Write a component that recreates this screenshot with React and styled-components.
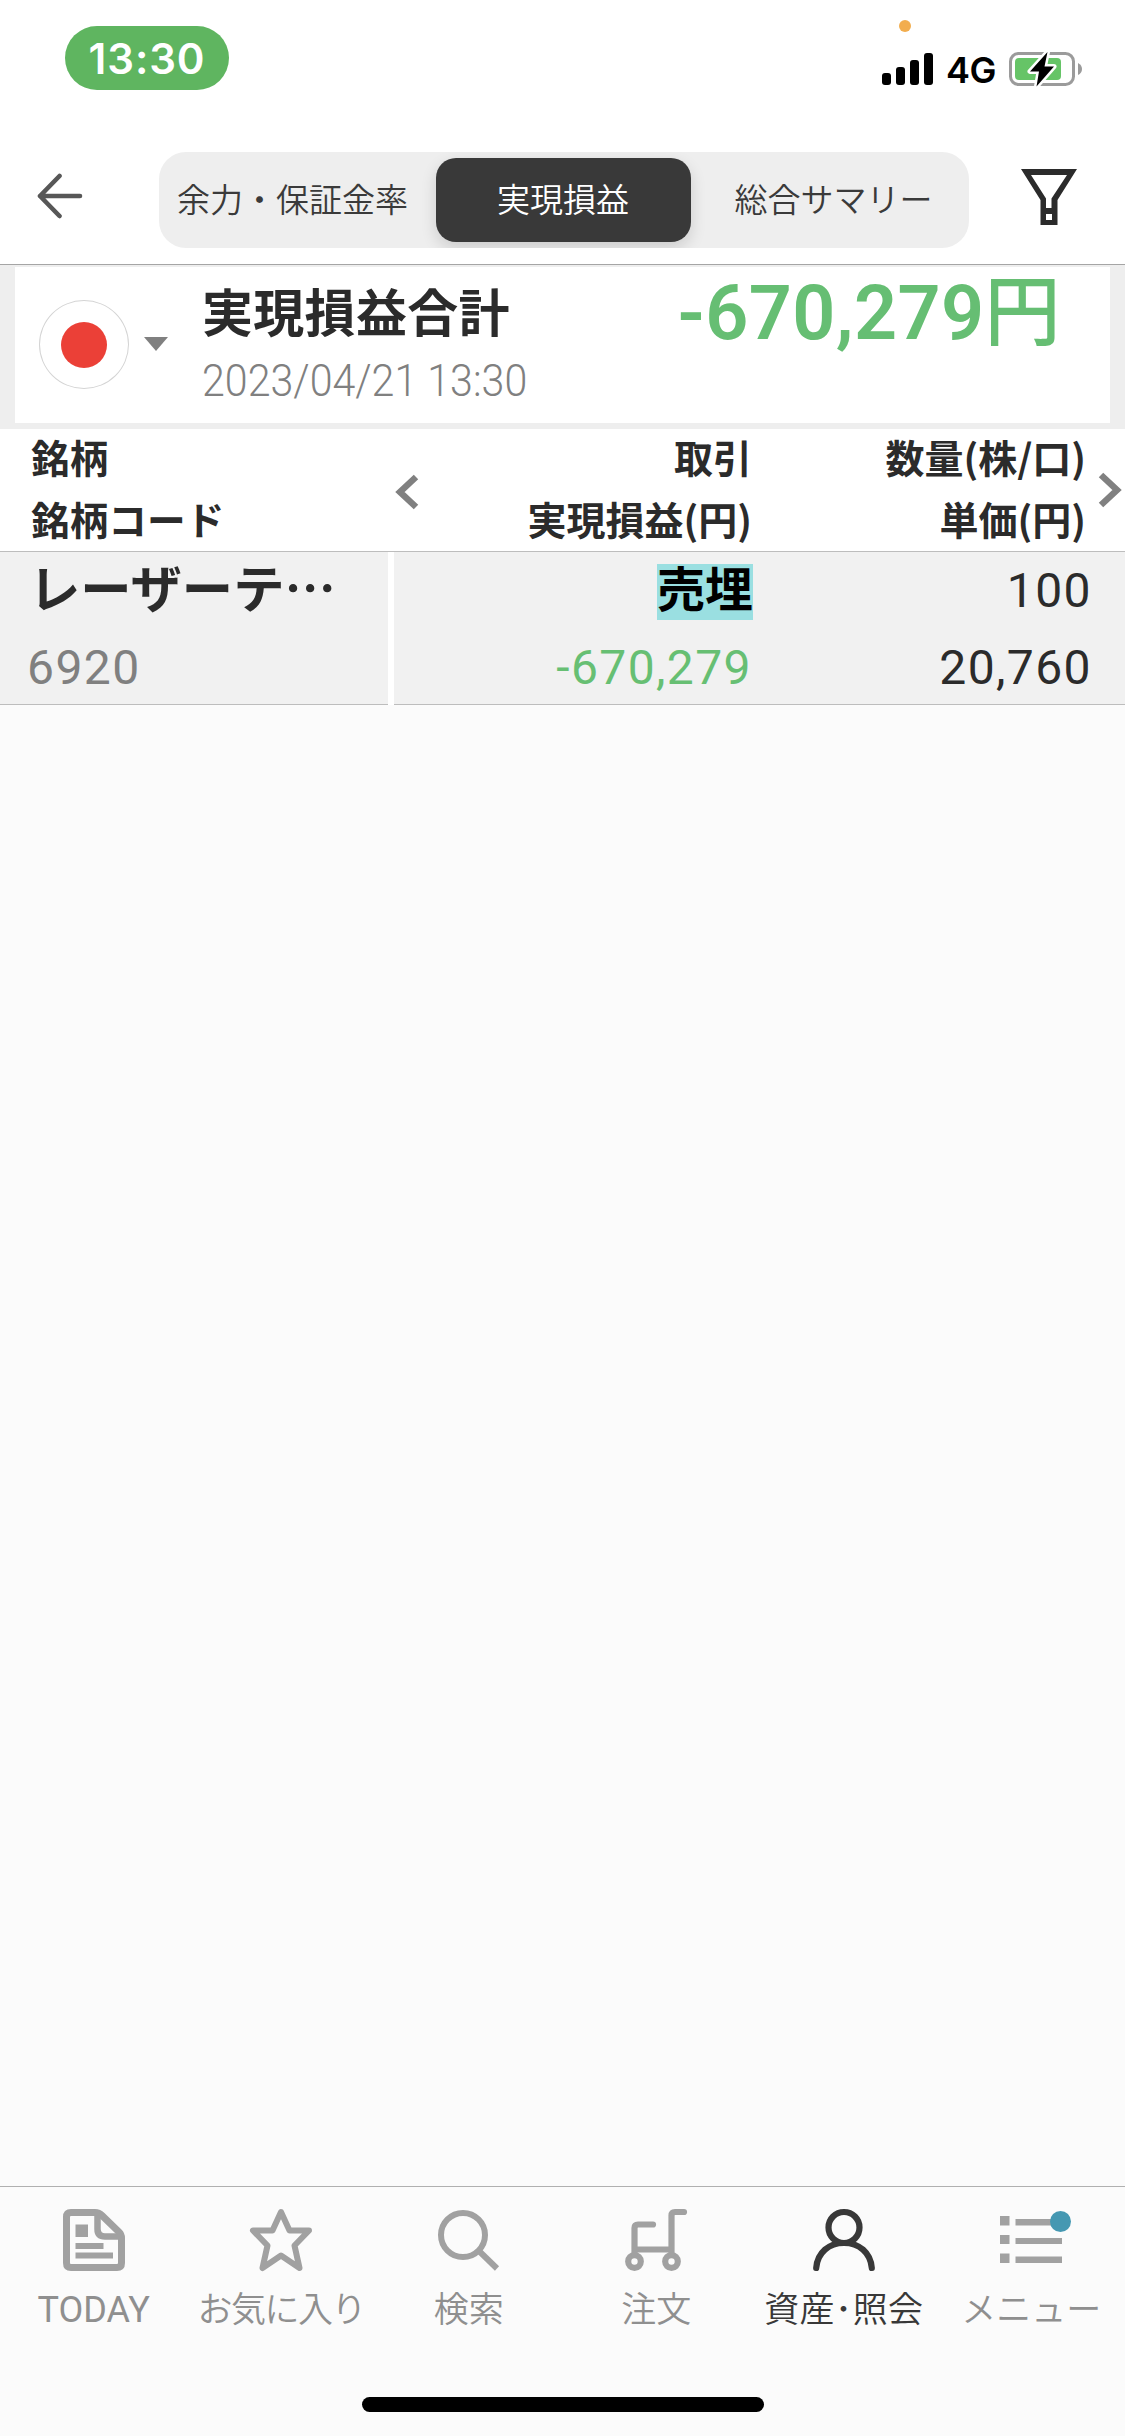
import React from "react"
import styled, { createGlobalStyle } from "styled-components"

const GlobalStyle = createGlobalStyle`
  * {
    box-sizing: border-box;
  }
  body {
    margin: 0;
    background: #fbfbfb;
    color: #2b2b2b;
    font-family: Roboto, "Noto Sans CJK JP", sans-serif;
  }
`

const Screen = styled.div`
  width: 1125px;
  height: 2436px;
  display: flex;
  flex-direction: column;
  overflow: hidden;
`

/* status bar */

const StatusBar = styled.div`
  height: 132px;
  flex: none;
  display: flex;
  justify-content: space-between;
  align-items: flex-start;
  padding: 26px 43px 0 65px;
  background: #fff;
`

const TimePill = styled.div`
  width: 164px;
  height: 64px;
  border-radius: 32px;
  background: #5fb560;
  color: #fff;
  font: 600 42px/65px Inter, sans-serif;
  letter-spacing: 0.9px;
  text-align: center;
`

const StatusRight = styled.div`
  display: flex;
  align-items: center;
  position: relative;
  height: 36px;
  margin-top: 25px;
`

const MicDot = styled.span`
  position: absolute;
  left: 17px;
  top: -31px;
  width: 12px;
  height: 12px;
  border-radius: 6px;
  background: #f2ad4e;
`

const Network = styled.span`
  width: 76px;
  padding: 2px 0 0 13px;
  font: 600 36px/36px Inter, sans-serif;
  letter-spacing: -0.5px;
  color: #000;
`

/* top navigation */

const NavBar = styled.div`
  height: 133px;
  flex: none;
  display: flex;
  align-items: flex-start;
  padding: 20px 48px 0 37px;
  background: #fff;
  border-bottom: 1px solid #a5a5a5;
`

const BackIcon = styled.svg`
  margin: 21px 76px 0 0;
  flex: none;
`

const FilterIcon = styled.svg`
  margin: 17px 0 0 auto;
  flex: none;
`

const Segments = styled.div`
  display: flex;
  justify-content: space-between;
  width: 810px;
  height: 96px;
  padding: 6px 8px 6px 6px;
  border-radius: 27px;
  background: #eeeeee;
  overflow: hidden;
`

const Segment = styled.div`
  width: 255px;
  height: 84px;
  border-radius: 20px;
  text-align: center;
  font-size: 33px;
  font-weight: 350;
  line-height: 86px;
  white-space: nowrap;
  color: ${props => (props.$active ? "#fff" : "#3a3a3a")};
  background: ${props => (props.$active ? "#393939" : "none")};
  box-shadow: ${props =>
    props.$active ? "0 6px 16px rgba(0, 0, 0, 0.14)" : "none"};
`

/* profit and loss summary */

const SummaryWrap = styled.div`
  height: 164px;
  flex: none;
  padding: 2px 15px 6px;
  background: #eeeeee;
`

const Summary = styled.div`
  height: 156px;
  display: flex;
  padding: 0 49px 0 24px;
  background: #fff;
`

const Flag = styled.div`
  width: 90px;
  height: 89px;
  margin-top: 33px;
  flex: none;
  display: grid;
  place-items: center;
  border: 1px solid #d4d4d4;
  border-radius: 50%;

  &::after {
    content: "";
    width: 46px;
    height: 46px;
    border-radius: 50%;
    background: #eb4037;
  }
`

const Caret = styled.div`
  height: 0;
  margin: 70px 34px 0 15px;
  border: 12px solid transparent;
  border-top: 14px solid #808080;
  border-bottom: 0;
`

const SummaryTitle = styled.div`
  height: 90px;
  font-size: 51px;
  font-weight: 700;
  line-height: 95px;
  letter-spacing: 0.3px;
  white-space: nowrap;
`

const SummaryDate = styled.div`
  color: #808080;
  font-size: 44px;
  font-weight: 300;
  line-height: 49px;
  white-space: nowrap;
  transform: scaleX(0.935);
  transform-origin: left;
`

const Amount = styled.div`
  margin-left: auto;
  color: #66be73;
  font-size: 75.5px;
  font-weight: 600;
  line-height: 92px;
  letter-spacing: 0.4px;
  white-space: nowrap;
`

const Yen = styled.span`
  font-size: 76px;
  font-weight: 500;
`

/* table */

const Table = styled.div`
  flex: none;
`

const TableRow = styled.div`
  display: grid;
  grid-template-columns: 394px 1fr 1fr;
  height: ${props => props.$height}px;
`

const HeadRow = styled(TableRow)`
  background: #fff;
  border-bottom: 1px solid #bdbdbd;
`

const HeadCell = styled.div`
  width: ${props => props.$width}px;
  height: 122px;
  text-align: right;
  font-family: "Noto Sans CJK JP", sans-serif;
  font-size: 39px;
  font-weight: 700;
  line-height: 62px;
  margin-top: -4px;
  white-space: nowrap;
`

const StockHeadCell = styled(HeadCell)`
  padding-left: 31px;
  font-size: 38.7px;
  text-align: left;
`

const ScrollableHead = styled.div`
  grid-column: 2 / 4;
  display: flex;
`

const Arrow = styled.svg`
  flex: none;
  margin-top: ${props => props.$top}px;
`

const BodyRow = styled(TableRow)`
  grid-template-columns: 394px 360px 371px;
  background: #fff;
`

const BodyCell = styled.div`
  background: #f1f1f1;
  border-bottom: 1px solid #bdbdbd;
  padding-right: ${props => props.$right || 0}px;
  text-align: right;
`

const StockCell = styled(BodyCell)`
  margin-right: 6px;
  padding-left: 27px;
  text-align: left;
`

const StockName = styled.div`
  height: 77px;
  padding-left: 2px;
  font-family: "Noto Sans CJK JP", sans-serif;
  font-size: 51.3px;
  font-weight: 700;
  line-height: 68px;
  white-space: nowrap;
`

const Figure = styled.div`
  height: 75px;
  font-size: 48px;
  line-height: 78px;
  letter-spacing: 1.4px;
  color: ${props => props.$color || "#2b2b2b"};

  &:first-child {
    height: 77px;
  }
`

const TradeLine = styled.div`
  height: 77px;
  display: flex;
  justify-content: flex-end;
  padding-top: 12px;
`

const TradeType = styled.span`
  width: 96px;
  height: 56px;
  margin-right: -1px;
  background: #9adfe1;
  color: #000;
  font-family: "Noto Sans CJK JP", sans-serif;
  font-size: 48px;
  font-weight: 700;
  line-height: 45px;
  text-align: center;
`

const Empty = styled.div`
  flex: 1;
`

/* bottom tabs */

const TabBar = styled.div`
  flex: none;
  height: 211px;
  display: grid;
  grid-template-columns: repeat(6, 1fr);
  border-top: 1px solid #b0b0b0;
`

const Tab = styled.div`
  display: flex;
  flex-direction: column;
  align-items: center;
  padding-top: 22px;
  color: ${props => (props.$active ? "#383838" : "#a1a1a1")};
`

const TabIcon = styled.svg`
  display: block;
  overflow: visible;
`

const TabLabel = styled.div`
  margin-top: ${props => (props.$latin ? 14 : 11)}px;
  font-family: ${props => (props.$latin ? "Roboto" : '"Noto Sans CJK JP"')},
    sans-serif;
  font-size: ${props => (props.$latin ? 36 : 35)}px;
  font-weight: ${props => (props.$latin ? 400 : 350)};
  letter-spacing: ${props => props.$tracking || 0}px;
  line-height: 50px;
  white-space: nowrap;
  color: ${props => (props.$active ? "#383838" : "#8f8f8f")};
`

const HomeIndicator = styled.div`
  flex: none;
  width: 402px;
  height: 15px;
  margin: 0 auto 24px;
  border-radius: 8px;
  background: #000;
`

const tabs = [
  {
    label: "TODAY",
    latin: true,
    icon: (
      <>
        <g fill="none" stroke="currentColor" strokeWidth="7">
          <path d="M8 3.5H32Q36 3.5 39 6.500L56 23Q58.500 25.500 58.500 29V54Q58.500 58.500 54 58.500H8Q3.500 58.500 3.500 54V8Q3.500 3.500 8 3.500Z" />
          <path d="M34.500 5V20Q34.500 27.500 42 27.500H57" strokeWidth="6.500" />
        </g>
        <path
          fill="currentColor"
          d="M12.500 15.500H25V28H12.500ZM12.500 34H40.500V40H12.500ZM12.500 43.500H50V49.500H12.500Z"
        />
      </>
    )
  },
  {
    label: "お気に入り",
    tracking: -1.5,
    icon: (
      <path
        fill="none"
        stroke="currentColor"
        strokeWidth="6"
        strokeLinejoin="round"
        d="M31 3L39.500 21.500H59L44.500 36.500L49.500 59L31 46.500L12.500 59L17.500 36.500L3 21.500H22.500Z"
      />
    )
  },
  {
    label: "検索",
    icon: (
      <g fill="none" stroke="currentColor" strokeWidth="6">
        <circle cx="25" cy="26" r="22" />
        <path d="M40.500 41.500L59 59.500" />
      </g>
    )
  },
  {
    label: "注文",
    icon: (
      <g
        fill="none"
        stroke="currentColor"
        strokeWidth="6.200"
        strokeLinecap="round"
      >
        <circle cx="9.500" cy="52.500" r="6.300" />
        <circle cx="46.500" cy="52.500" r="6.300" />
        <path d="M28 15.500H13Q9.500 15.500 9.500 19V45M10 40.500H46M59 3H50Q46.500 3 46.500 6.500V45" />
      </g>
    )
  },
  {
    label: "資産･照会",
    active: true,
    tracking: 0.3,
    icon: (
      <g
        fill="none"
        stroke="currentColor"
        strokeWidth="6.200"
        strokeLinecap="round"
      >
        <circle cx="31" cy="18.500" r="15.500" />
        <path d="M3.200 59C4.500 43.500 16 34 31 34S57.500 43.500 58.800 59" />
      </g>
    )
  },
  {
    label: "メニュー",
    icon: (
      <>
        <path
          fill="currentColor"
          d="M0 7H9.500V16.500H0ZM15.500 10H62V16.500H15.500ZM0 26H9.500V35H0ZM15.500 29H62V35H15.500ZM0 44.500H9.500V54H0ZM15.500 47.500H62V54H15.500Z"
        />
        <circle cx="60.500" cy="12.500" r="10.500" fill="#4598b2" />
      </>
    )
  }
]

function StatusIcons() {
  return (
    <StatusRight>
      <MicDot />
      <svg width="51" height="36" viewBox="0 0 51 36">
        <rect x="0" y="22" width="9" height="12" rx="3" />
        <rect x="14" y="16" width="9" height="18" rx="3" />
        <rect x="28" y="9" width="9" height="25" rx="3" />
        <rect x="42" y="2" width="9" height="32" rx="3" />
      </svg>
      <Network>4G</Network>
      <svg width="73" height="36" viewBox="0 0 73 36">
        <rect
          x="1.500"
          y="2.500"
          width="63"
          height="31"
          rx="8"
          fill="none"
          stroke="#9b9b9b"
          strokeWidth="3"
        />
        <path d="M69 12Q73 14 73 18T69 24Z" fill="#9b9b9b" />
        <rect x="6" y="7" width="46" height="22" rx="4" fill="#66c467" />
        <path
          d="M38.500 1L21 20.500H30L27.500 35.500L45 15.500H35.500Z"
          fill="#000"
          stroke="#fff"
          strokeWidth="5"
          strokeLinejoin="round"
          paintOrder="stroke"
        />
      </svg>
    </StatusRight>
  )
}

export default function App() {
  return (
    <Screen>
      <GlobalStyle />
      <StatusBar>
        <TimePill>13:30</TimePill>
        <StatusIcons />
      </StatusBar>

      <NavBar>
        <BackIcon width="46" height="46" viewBox="0 0 46 46">
          <path
            d="M22.500 3L3 23L22.500 43M3 23H43"
            fill="none"
            stroke="#575757"
            strokeWidth="4.600"
            strokeLinecap="round"
            strokeLinejoin="round"
          />
        </BackIcon>
        <Segments>
          <Segment>余力・保証金率</Segment>
          <Segment $active>実現損益</Segment>
          <Segment>総合サマリー</Segment>
        </Segments>
        <FilterIcon width="56" height="56" viewBox="0 0 56 56">
          <path
            fill="#2b2b2b"
            fillRule="evenodd"
            d="M0 0H56L36.500 31V56H19.500V31ZM10 6L25 29.500V39H30.500V29.500L46 6ZM25 45V51H31V45Z"
          />
        </FilterIcon>
      </NavBar>

      <SummaryWrap>
        <Summary>
          <Flag />
          <Caret />
          <div>
            <SummaryTitle>実現損益合計</SummaryTitle>
            <SummaryDate>2023/04/21 13:30</SummaryDate>
          </div>
          <Amount>
            -670,279<Yen>円</Yen>
          </Amount>
        </Summary>
      </SummaryWrap>

      <Table>
        <HeadRow $height={123}>
          <StockHeadCell $width={394}>
            銘柄
            <br />
            銘柄コード
          </StockHeadCell>
          <ScrollableHead>
            <Arrow $top={45} width="26" height="36" viewBox="0 0 26 36">
              <path
                d="M22 3L6 18L22 33"
                fill="none"
                stroke="#808080"
                strokeWidth="6.500"
              />
            </Arrow>
            <HeadCell $width={332}>
              取引
              <br />
              実現損益(円)
            </HeadCell>
            <HeadCell $width={334}>
              数量(株/口)
              <br />
              単価(円)
            </HeadCell>
            <Arrow $top={43} width="39" height="36" viewBox="0 0 39 36">
              <path
                d="M15 3L31 18L15 33"
                fill="none"
                stroke="#808080"
                strokeWidth="6.500"
              />
            </Arrow>
          </ScrollableHead>
        </HeadRow>
        <BodyRow $height={153}>
          <StockCell>
            <StockName>レーザーテ…</StockName>
            <Figure $color="#808080">6920</Figure>
          </StockCell>
          <BodyCell $right={2}>
            <TradeLine>
              <TradeType>売埋</TradeType>
            </TradeLine>
            <Figure $color="#67bf73">-670,279</Figure>
          </BodyCell>
          <BodyCell $right={33}>
            <Figure>100</Figure>
            <Figure>20,760</Figure>
          </BodyCell>
        </BodyRow>
      </Table>

      <Empty />

      <TabBar>
        {tabs.map(tab => (
          <Tab key={tab.label} $active={tab.active}>
            <TabIcon width="62" height="62" viewBox="0 0 62 62">
              {tab.icon}
            </TabIcon>
            <TabLabel
              $latin={tab.latin}
              $active={tab.active}
              $tracking={tab.tracking}
            >
              {tab.label}
            </TabLabel>
          </Tab>
        ))}
      </TabBar>
      <HomeIndicator />
    </Screen>
  )
}
